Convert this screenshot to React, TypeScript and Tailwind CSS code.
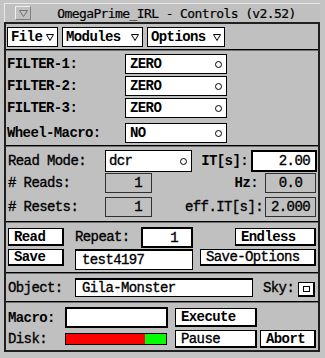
import React from 'react';

// X11/Tk style control panel

const regular = '[-webkit-text-stroke:0.35px_black]';

function Separator({ className = '' }: { className?: string }) {
    return <div className={`h-[2px] border-t border-black border-b border-b-[#707070] ${className}`} />;
}

function Choice({ value, w }: { value: string; w: string }) {
    return (
        <div className={`${w} h-full bg-white border border-black flex items-center justify-between pl-[4px] pr-[4px]`}>
            <span className="font-bold">{value}</span>
            <span className="w-[7px] h-[7px] rounded-full border border-black" />
        </div>
    );
}

function Btn({ label, className = '', bold = true }: { label: string; className?: string; bold?: boolean }) {
    return (
        <div
            className={`bg-white border border-black border-r-2 border-b-2 flex items-center pl-[5px] ${bold ? 'font-bold' : regular} ${className}`}
        >
            {label}
        </div>
    );
}

function ReadOnly({ value, className = '' }: { value: string; className?: string }) {
    return (
        <div className={`h-full border border-[#303030] flex items-center ${regular} ${className}`}>{value}</div>
    );
}

function MenuBtn({ label, w }: { label: string; w: string }) {
    return (
        <div className={`${w} h-full bg-white border border-black flex items-center justify-between pl-[3px] pr-[3px]`}>
            <span className="font-bold">{label}</span>
            <svg width="8" height="7" viewBox="0 0 8 7">
                <path d="M0.5 0.5 H7.5 L4 6.5 Z" fill="none" stroke="black" strokeWidth="1" />
            </svg>
        </div>
    );
}

export default function App() {
    return (
        <div className="w-[325px] h-[358px] bg-[#c4c4c4] pl-[4px] pr-[5px] pt-[3px] [font-family:'Liberation_Mono',monospace] text-[14px] tracking-[-0.6px] leading-none text-black overflow-hidden">
            {/* Title bar */}
            <div className="h-[19px] flex items-center bg-[#c0c0c0] border-t border-l border-[#e8e8e8]">
                <div className="ml-[10px] w-[16px] h-[14px] border-t border-l border-[#f0f0f0] border-r border-b border-r-[#808080] border-b-[#808080] flex items-center justify-center">
                    <svg width="9" height="7" viewBox="0 0 9 7">
                        <path d="M0.5 0.5 H8.5 L4.5 6.5 Z" fill="none" stroke="#707070" strokeWidth="1" />
                    </svg>
                </div>
                <div className="flex-1 text-center [font-family:'DejaVu_Sans_Mono',monospace] text-[13px] tracking-[-0.6px] [-webkit-text-stroke:0.2px_black] pl-[2px]">
                    OmegaPrime_IRL - Controls (v2.52)
                </div>
            </div>

            {/* Main panel */}
            <div className="h-[330px] bg-[#c0c0c0] border-2 border-[#202020] flex flex-col">
                {/* Menus */}
                <div className="mt-[3px] h-[20px] pl-[1px] flex gap-[4px]">
                    <MenuBtn label="File" w="w-[51px]" />
                    <MenuBtn label="Modules" w="w-[81px]" />
                    <MenuBtn label="Options" w="w-[78px]" />
                </div>
                <Separator className="mt-[2px]" />

                {/* Filters */}
                <div className="mt-[3px] h-[20px] flex items-center">
                    <div className="w-[119px] pl-[1px] font-bold">FILTER-1:</div>
                    <Choice value="ZERO" w="w-[102px]" />
                </div>
                <div className="mt-[2px] h-[20px] flex items-center">
                    <div className="w-[119px] pl-[1px] font-bold">FILTER-2:</div>
                    <Choice value="ZERO" w="w-[102px]" />
                </div>
                <div className="mt-[2px] h-[20px] flex items-center">
                    <div className="w-[119px] pl-[1px] font-bold">FILTER-3:</div>
                    <Choice value="ZERO" w="w-[102px]" />
                </div>
                <div className="mt-[5px] h-[20px] flex items-center">
                    <div className="w-[119px] pl-[1px] font-bold">Wheel-Macro:</div>
                    <Choice value="NO" w="w-[102px]" />
                </div>
                <Separator className="mt-[2px]" />

                {/* Read mode */}
                <div className="mt-[3px] h-[22px] flex items-center">
                    <div className={`w-[99px] pl-[2px] ${regular}`}>Read Mode:</div>
                    <div className="w-[87px] h-full bg-white border border-black flex items-center justify-between pl-[3px] pr-[4px]">
                        <span className={regular}>dcr</span>
                        <span className="w-[7px] h-[7px] rounded-full border border-black" />
                    </div>
                    <div className="flex-1 text-right pr-[3px] font-bold">IT[s]:</div>
                    <div className={`w-[66px] h-full mr-[1px] bg-white border-2 border-black flex items-center justify-end pr-[5px] ${regular}`}>
                        2.00
                    </div>
                </div>
                <div className="mt-[1px] h-[20px] flex items-center">
                    <div className={`w-[99px] pl-[2px] ${regular}`}># Reads:</div>
                    <ReadOnly value="1" className="w-[47px] justify-end pr-[9px]" />
                    <div className="flex-1 text-right pr-[7px] font-bold">Hz:</div>
                    <ReadOnly value="0.0" className="w-[51px] mr-[2px] justify-center" />
                </div>
                <div className="mt-[4px] h-[20px] flex items-center">
                    <div className={`w-[99px] pl-[2px] ${regular}`}># Resets:</div>
                    <ReadOnly value="1" className="w-[47px] justify-end pr-[9px]" />
                    <div className={`flex-1 text-right pr-[2px] ${regular}`}>eff.IT[s]:</div>
                    <ReadOnly value="2.000" className="w-[51px] mr-[2px] justify-center" />
                </div>
                <Separator className="mt-[4px]" />

                {/* Read / Save */}
                <div className="mt-[4px] h-[21px] flex items-start">
                    <Btn label="Read" className="ml-[2px] mt-[1px] w-[56px] h-[18px]" />
                    <div className={`w-[77px] pl-[11px] pt-[3px] ${regular}`}>Repeat:</div>
                    <div className={`w-[52px] h-[21px] bg-white border-2 border-black flex items-center justify-end pr-[13px] ${regular}`}>
                        1
                    </div>
                    <Btn label="Endless" className="ml-[42px] mt-[1px] w-[81px] h-[18px]" />
                </div>
                <div className="mt-[1px] h-[21px] flex items-start">
                    <Btn label="Save" className="ml-[2px] w-[56px] h-[17px]" />
                    <div className={`ml-[11px] w-[118px] h-[21px] bg-white border border-black border-t-2 flex items-center pl-[6px] ${regular}`}>
                        test4197
                    </div>
                    <Btn label="Save-Options" bold={false} className="ml-[7px] w-[116px] h-[17px]" />
                </div>
                <Separator className="mt-[2px]" />

                {/* Object */}
                <div className="mt-[4px] h-[19px] flex items-center">
                    <div className={`w-[69px] pl-[2px] ${regular}`}>Object:</div>
                    <div className={`w-[178px] h-full bg-white border border-black border-t-2 flex items-center pl-[6px] ${regular}`}>
                        Gila-Monster
                    </div>
                    <div className={`ml-[10px] w-[35px] ${regular}`}>Sky:</div>
                    <div className="w-[17px] h-[15px] self-end bg-white border border-black border-r-2 border-b-2 flex items-center justify-center">
                        <span className="w-[7px] h-[6px] border border-black" />
                    </div>
                </div>
                <Separator className="mt-[4px]" />

                {/* Macro / Disk */}
                <div className="mt-[4px] h-[21px] flex items-start">
                    <div className="w-[59px] pl-[2px] pt-[4px] font-bold">Macro:</div>
                    <div className="w-[103px] h-[21px] bg-white border-2 border-black" />
                    <Btn label="Execute" className="ml-[7px] mt-[1px] w-[82px] h-[19px]" />
                </div>
                <div className="mt-[2px] h-[18px] flex items-center">
                    <div className={`w-[59px] pl-[2px] ${regular}`}>Disk:</div>
                    <div className="w-[102px] h-[12px] border border-black flex">
                        <div className="w-[79px] h-full bg-[#ff0000]" />
                        <div className="flex-1 h-full bg-[#00ff00]" />
                    </div>
                    <Btn label="Pause" bold={false} className="ml-[8px] w-[82px] h-[18px]" />
                    <Btn label="Abort" className="ml-[3px] w-[56px] h-[18px]" />
                </div>
            </div>
        </div>
    );
}
